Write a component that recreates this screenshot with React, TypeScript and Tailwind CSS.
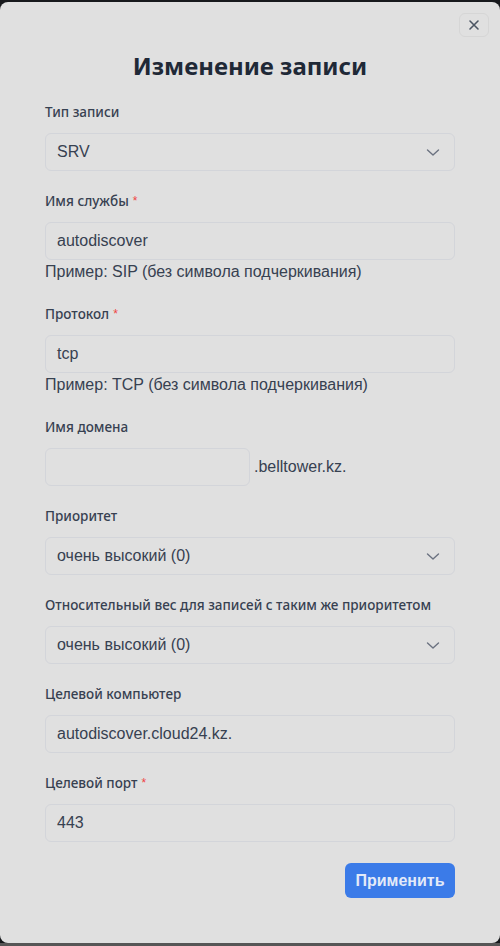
import React from "react";

const font = { fontFamily: '"Liberation Sans", Arial, sans-serif' };
const titleFont = { fontFamily: '"Noto Sans", "Open Sans", sans-serif' };

function Label({ text, required }: { text: string; required?: boolean }) {
  return (
    <div className="text-[13.5px] leading-[20px] font-medium text-[#374151]" style={titleFont}>
      {text}
      {required && <span className="text-[#ef4444] ml-[4px] text-[12px] align-top" style={font}>*</span>}
    </div>
  );
}

function Chevron() {
  return (
    <svg width="20" height="20" viewBox="0 0 20 20" fill="none" className="text-[#6b7280]">
      <path d="M4.5 8l5.5 5 5.5-5" stroke="currentColor" strokeWidth="1.4" strokeLinecap="round" strokeLinejoin="round" />
    </svg>
  );
}

function Select({ value }: { value: string }) {
  return (
    <div className="mt-[11px] h-[38px] rounded-[6px] border border-[#d3d5da] flex items-center justify-between pl-[11px] pr-[11px] text-[16px] text-[#374151]">
      <span>{value}</span>
      <Chevron />
    </div>
  );
}

function Input({ value, className = "" }: { value: string; className?: string }) {
  return (
    <div className={"mt-[11px] h-[38px] rounded-[6px] border border-[#d3d5da] flex items-center pl-[11px] text-[16px] text-[#374151] " + className}>
      {value}
    </div>
  );
}

function Help({ text }: { text: string }) {
  return <div className="text-[16px] leading-[24px] text-[#374151]">{text}</div>;
}

export default function App() {
  return (
    <div className="w-[500px] h-[946px] bg-[#17191c] flex flex-col overflow-hidden" style={font}>
      <div className="h-[2px] shrink-0" />
      <div className="relative w-[500px] h-[941px] shrink-0 bg-[#e0e0e0] rounded-[8px] px-[45px]">
        <button className="absolute right-[11px] top-[11px] w-[30px] h-[24px] rounded-[6px] border border-[#d6d6d6] flex items-center justify-center text-[#4b5563]">
          <svg width="16" height="16" viewBox="0 0 20 20" fill="none">
            <path d="M5 5l10 10M15 5L5 15" stroke="currentColor" strokeWidth="2" strokeLinecap="round" />
          </svg>
        </button>
        <h1 className="pt-[48px] text-center text-[24px] leading-[32px] font-bold text-[#1f2937]" style={titleFont}>Изменение записи</h1>
        <div className="mt-[20px]">
          <Label text="Тип записи" />
          <Select value="SRV" />
        </div>
        <div className="mt-[20px]">
          <Label text="Имя службы" required />
          <Input value="autodiscover" />
          <Help text="Пример: SIP (без символа подчеркивания)" />
        </div>
        <div className="mt-[20px]">
          <Label text="Протокол" required />
          <Input value="tcp" />
          <Help text="Пример: TCP (без символа подчеркивания)" />
        </div>
        <div className="mt-[20px]">
          <Label text="Имя домена" />
          <div className="flex items-center">
            <Input value="" className="w-[205px]" />
            <span className="mt-[11px] ml-[4px] text-[16px] text-[#374151]">.belltower.kz.</span>
          </div>
        </div>
        <div className="mt-[20px]">
          <Label text="Приоритет" />
          <Select value="очень высокий (0)" />
        </div>
        <div className="mt-[20px]">
          <Label text="Относительный вес для записей с таким же приоритетом" />
          <Select value="очень высокий (0)" />
        </div>
        <div className="mt-[20px]">
          <Label text="Целевой компьютер" />
          <Input value="autodiscover.cloud24.kz." />
        </div>
        <div className="mt-[20px]">
          <Label text="Целевой порт" required />
          <Input value="443" />
        </div>
        <div className="mt-[21px] flex justify-end">
          <button className="h-[35px] w-[110px] rounded-[6px] bg-[#3b7be8] text-[#e3eaf8] text-[16px] font-bold">Применить</button>
        </div>
      </div>
      <div className="flex-1 bg-[#565656]" />
    </div>
  );
}
